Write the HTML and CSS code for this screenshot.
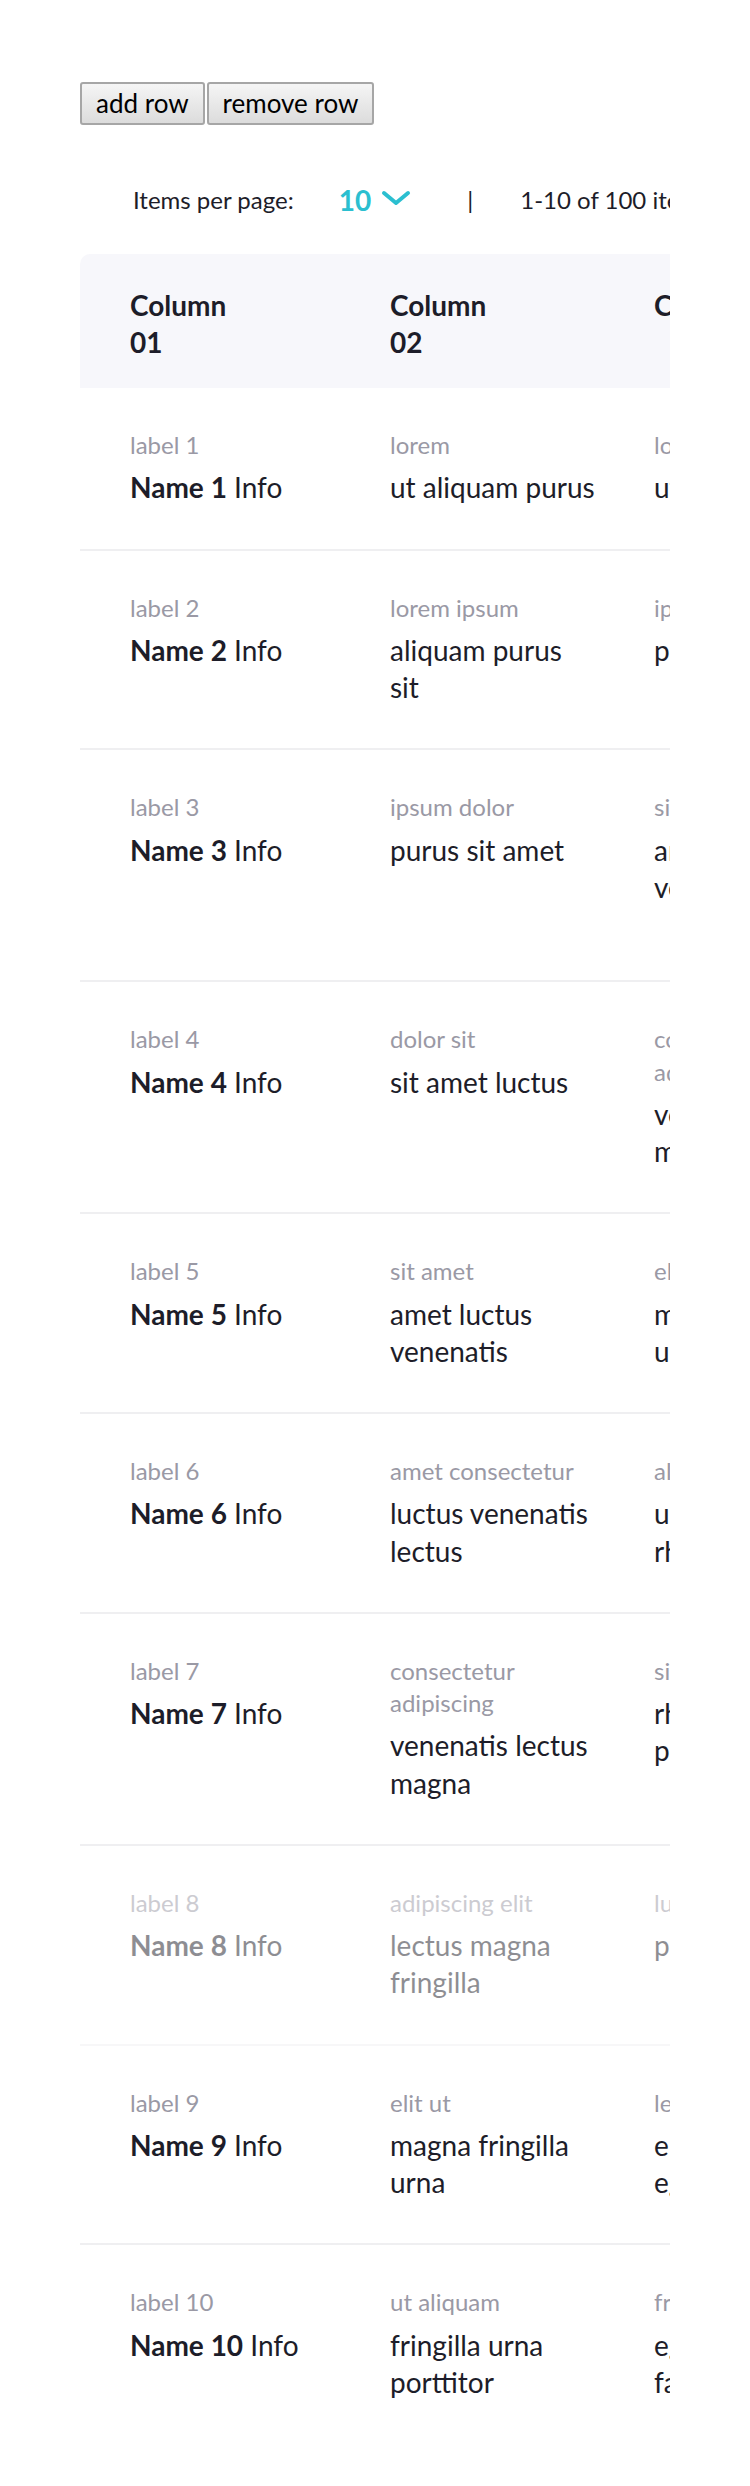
FILE: index.html
```html
<!DOCTYPE html>
<html lang="en">
<head>
<meta charset="utf-8">
<title>Table</title>
<link rel="stylesheet" href="styles.css">
</head>
<body>
<div class="page">
  <div class="actions">
    <button class="btn" type="button">add row</button>
    <button class="btn" type="button">remove row</button>
  </div>
  <div class="wrapper">
    <div class="pager">
      <span class="pager-label">Items per page:</span>
      <span class="pager-value">10</span>
      <svg class="chevron" width="30" height="16" viewBox="0 0 30 16"><polyline points="3,3 15,13 27,3" fill="none" stroke="#2bbfd0" stroke-width="4" stroke-linecap="round" stroke-linejoin="round"/></svg>
      <span class="pager-sep">|</span>
      <span class="pager-range">1-10 of 100 items</span>
    </div>
    <div class="table">
      <div class="thead">
        <div class="th"><span class="th-text">Column 01</span></div>
        <div class="th"><span class="th-text">Column 02</span></div>
        <div class="th"><span class="th-text th-text--wide">Column 03</span></div>
        <div class="th"><span class="th-text th-text--wide">Column 04</span></div>
      </div>

      <div class="row">
        <div class="cell"><div class="label">label 1</div><div class="value"><b>Name 1</b> Info</div></div>
        <div class="cell c2"><div class="label">lorem</div><div class="value">ut aliquam purus</div></div>
        <div class="cell"><div class="label">lorem</div><div class="value">ut aliquam</div></div>
        <div class="cell"><div class="label">dolor</div><div class="value">sit amet</div></div>
      </div>
      <div class="row">
        <div class="cell"><div class="label">label 2</div><div class="value"><b>Name 2</b> Info</div></div>
        <div class="cell c2"><div class="label">lorem ipsum</div><div class="value">aliquam purus sit</div></div>
        <div class="cell"><div class="label">ipsum dolor</div><div class="value">purus sit</div></div>
        <div class="cell"><div class="label">sit amet</div><div class="value">luctus</div></div>
      </div>
      <div class="row">
        <div class="cell"><div class="label">label 3</div><div class="value"><b>Name 3</b> Info</div></div>
        <div class="cell c2"><div class="label">ipsum dolor</div><div class="value">purus sit amet</div></div>
        <div class="cell"><div class="label">sit amet</div><div class="value">amet luctus venenatis</div></div>
        <div class="cell"><div class="label">consectetur adipiscing</div><div class="value">lectus magna fringilla</div></div>
      </div>
      <div class="row">
        <div class="cell"><div class="label">label 4</div><div class="value"><b>Name 4</b> Info</div></div>
        <div class="cell c2"><div class="label">dolor sit</div><div class="value">sit amet luctus</div></div>
        <div class="cell"><div class="label">consectetur adipiscing</div><div class="value">venenatis lectus magna</div></div>
        <div class="cell"><div class="label">elit</div><div class="value">magna</div></div>
      </div>
      <div class="row">
        <div class="cell"><div class="label">label 5</div><div class="value"><b>Name 5</b> Info</div></div>
        <div class="cell c2"><div class="label">sit amet</div><div class="value">amet luctus venenatis</div></div>
        <div class="cell"><div class="label">elit ut</div><div class="value">magna fringilla urna</div></div>
        <div class="cell"><div class="label">ut</div><div class="value">urna</div></div>
      </div>
      <div class="row">
        <div class="cell"><div class="label">label 6</div><div class="value"><b>Name 6</b> Info</div></div>
        <div class="cell c2"><div class="label">amet consectetur</div><div class="value">luctus venenatis lectus</div></div>
        <div class="cell"><div class="label">aliquam</div><div class="value">urna porttitor rhoncus</div></div>
        <div class="cell"><div class="label">purus</div><div class="value">dolor</div></div>
      </div>
      <div class="row">
        <div class="cell"><div class="label">label 7</div><div class="value"><b>Name 7</b> Info</div></div>
        <div class="cell c2"><div class="label">consectetur adipiscing</div><div class="value">venenatis lectus magna</div></div>
        <div class="cell"><div class="label">sit</div><div class="value">rhoncus dolor purus</div></div>
        <div class="cell"><div class="label">amet</div><div class="value">non</div></div>
      </div>
      <div class="row is-disabled">
        <div class="cell"><div class="label">label 8</div><div class="value"><b>Name 8</b> Info</div></div>
        <div class="cell c2"><div class="label">adipiscing elit</div><div class="value">lectus magna fringilla</div></div>
        <div class="cell"><div class="label">luctus</div><div class="value">purus non</div></div>
        <div class="cell"><div class="label">enim</div><div class="value">eu</div></div>
      </div>
      <div class="row">
        <div class="cell"><div class="label">label 9</div><div class="value"><b>Name 9</b> Info</div></div>
        <div class="cell c2"><div class="label">elit ut</div><div class="value">magna fringilla urna</div></div>
        <div class="cell"><div class="label">lectus</div><div class="value">enim eu turpis egestas</div></div>
        <div class="cell"><div class="label">pretium</div><div class="value">faucibus</div></div>
      </div>
      <div class="row">
        <div class="cell"><div class="label">label 10</div><div class="value"><b>Name 10</b> Info</div></div>
        <div class="cell c2"><div class="label">ut aliquam</div><div class="value">fringilla urna porttitor</div></div>
        <div class="cell"><div class="label">fringilla</div><div class="value">egestas pretium faucibus</div></div>
        <div class="cell"><div class="label">urna</div><div class="value">rhoncus</div></div>
      </div>
    </div>
  </div>
</div>
</body>
</html>
```

FILE: styles.css
```css
html, body {
  margin: 0;
  padding: 0;
  background: #ffffff;
}

body {
  font-family: Lato, "Open Sans", sans-serif;
  color: #1d1d29;
}

.page {
  padding: 82px 80px 0;
}

.actions {
  display: flex;
  gap: 2px;
}

.btn {
  font-family: Lato, sans-serif;
  font-size: 26px;
  line-height: 31px;
  padding: 4px 14px;
  border: 2px solid #a6a6a6;
  border-radius: 3px;
  background: linear-gradient(#f5f5f5, #dcdcdc);
  color: #000000;
  margin: 0;
}

.wrapper {
  width: 590px;
  overflow: hidden;
  margin-top: 59px;
}

.pager {
  display: flex;
  align-items: center;
  white-space: nowrap;
  height: 32px;
  padding-left: 53px;
  margin-bottom: 38px;
  font-size: 24px;
  line-height: 32px;
  color: #1d1d29;
}

.pager > * {
  flex-shrink: 0;
}

.pager-value {
  margin-left: 45px;
  font-weight: 700;
  font-size: 28px;
  color: #2bbfd0;
}

.chevron {
  display: block;
  margin-left: 10px;
  margin-bottom: 5px;
}

.pager-sep {
  margin-left: 56px;
}

.pager-range {
  margin-left: 47px;
}

.table {
  width: max-content;
}

.thead,
.row {
  display: grid;
  grid-template-columns: 260px 264px 264px 264px;
  padding-left: 50px;
}

.thead {
  background: #f7f7fb;
  border-top-left-radius: 10px;
  padding-top: 33px;
  padding-bottom: 27px;
}

.th-text {
  display: block;
  max-width: 120px;
  font-size: 28px;
  line-height: 37px;
  font-weight: 700;
  color: #1d1d29;
}

.th-text--wide {
  max-width: none;
  white-space: nowrap;
}

.row {
  padding-top: 41px;
  padding-bottom: 42px;
  border-bottom: 2px solid #efeff1;
}

.row:last-child {
  border-bottom: none;
}

.row.is-disabled {
  opacity: 0.5;
}

.cell {
  padding-right: 50px;
}

.cell.c2 {
  padding-right: 58px;
}

.label {
  font-size: 24px;
  line-height: 32.25px;
  color: #9a99a5;
  margin-bottom: 8px;
}

.value {
  font-size: 28px;
  line-height: 37.25px;
  color: #1d1d29;
}

.value b {
  font-weight: 700;
}
```
